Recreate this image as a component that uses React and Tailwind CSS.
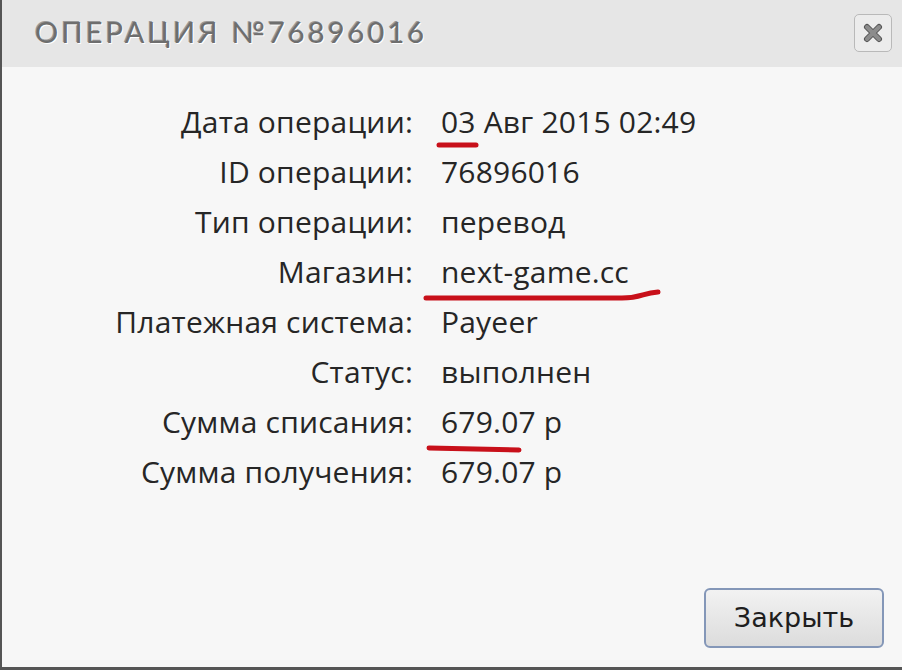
import React from "react";

const rows = [
  ["Дата операции:", "03 Авг 2015 02:49"],
  ["ID операции:", "76896016"],
  ["Тип операции:", "перевод"],
  ["Магазин:", "next-game.cc"],
  ["Платежная система:", "Payeer"],
  ["Статус:", "выполнен"],
  ["Сумма списания:", "679.07 р"],
  ["Сумма получения:", "679.07 р"],
];

export default function App() {
  return (
    <div className="relative w-[902px] h-[670px] overflow-hidden bg-[#f7f7f7] border-l-[2px] border-b-[3px] border-[#555]" style={{ fontFamily: '"Open Sans", sans-serif' }}>
      <div className="h-[67px] bg-[#e6e6e6] flex items-center justify-between pl-[33px] pr-[10px]">
        <div
          className="text-[29px] tracking-[3.1px] text-[#6e6e6e] leading-none mt-[-4px]"
          style={{ fontFamily: 'Lato, sans-serif', textShadow: "1px 1px 0 #fff, -1px -1px 0 #999" }}
        >
          ОПЕРАЦИЯ №76896016
        </div>
        <div className="w-[38px] h-[38px] mt-[-2px] rounded-[5px] border border-[#b9b9b9] bg-[#ececec] flex items-center justify-center">
          <svg width="22" height="22" viewBox="0 0 22 22">
            <path d="M5 5 L17 17 M17 5 L5 17" stroke="#555" strokeWidth="6" strokeLinecap="round" />
            <path d="M5 5 L17 17 M17 5 L5 17" stroke="#8c8c8c" strokeWidth="4" strokeLinecap="round" />
          </svg>
        </div>
      </div>
      <div className="pt-[29px] flex flex-col">
        {rows.map(([k, v]) => (
          <div key={k} className="flex h-[50px] items-center text-[30px] text-[#262626] tracking-[0.2px]">
            <div className="w-[411px] text-right">{k}</div>
            <div className="pl-[28px]">{v}</div>
          </div>
        ))}
      </div>
      <svg className="absolute left-0 top-0 pointer-events-none" width="902" height="670">
        <path d="M437 145 L474 145" stroke="#c8101a" strokeWidth="5" strokeLinecap="round" />
        <path d="M424 298 L620 298 C640 298 640 293 656 292" stroke="#c8101a" strokeWidth="5" strokeLinecap="round" fill="none" />
        <path d="M427 448 L517 450" stroke="#c8101a" strokeWidth="5" strokeLinecap="round" />
      </svg>
      <div className="absolute right-[18px] bottom-[19px]">
        <button className="w-[180px] h-[60px] rounded-[6px] border-[2px] border-[#8497b8] bg-gradient-to-b from-[#f2f2f2] to-[#dcdcdc] text-[27px] text-[#1e1e1e]" style={{ fontFamily: '"DejaVu Sans", sans-serif' }}>
          Закрыть
        </button>
      </div>
    </div>
  );
}
